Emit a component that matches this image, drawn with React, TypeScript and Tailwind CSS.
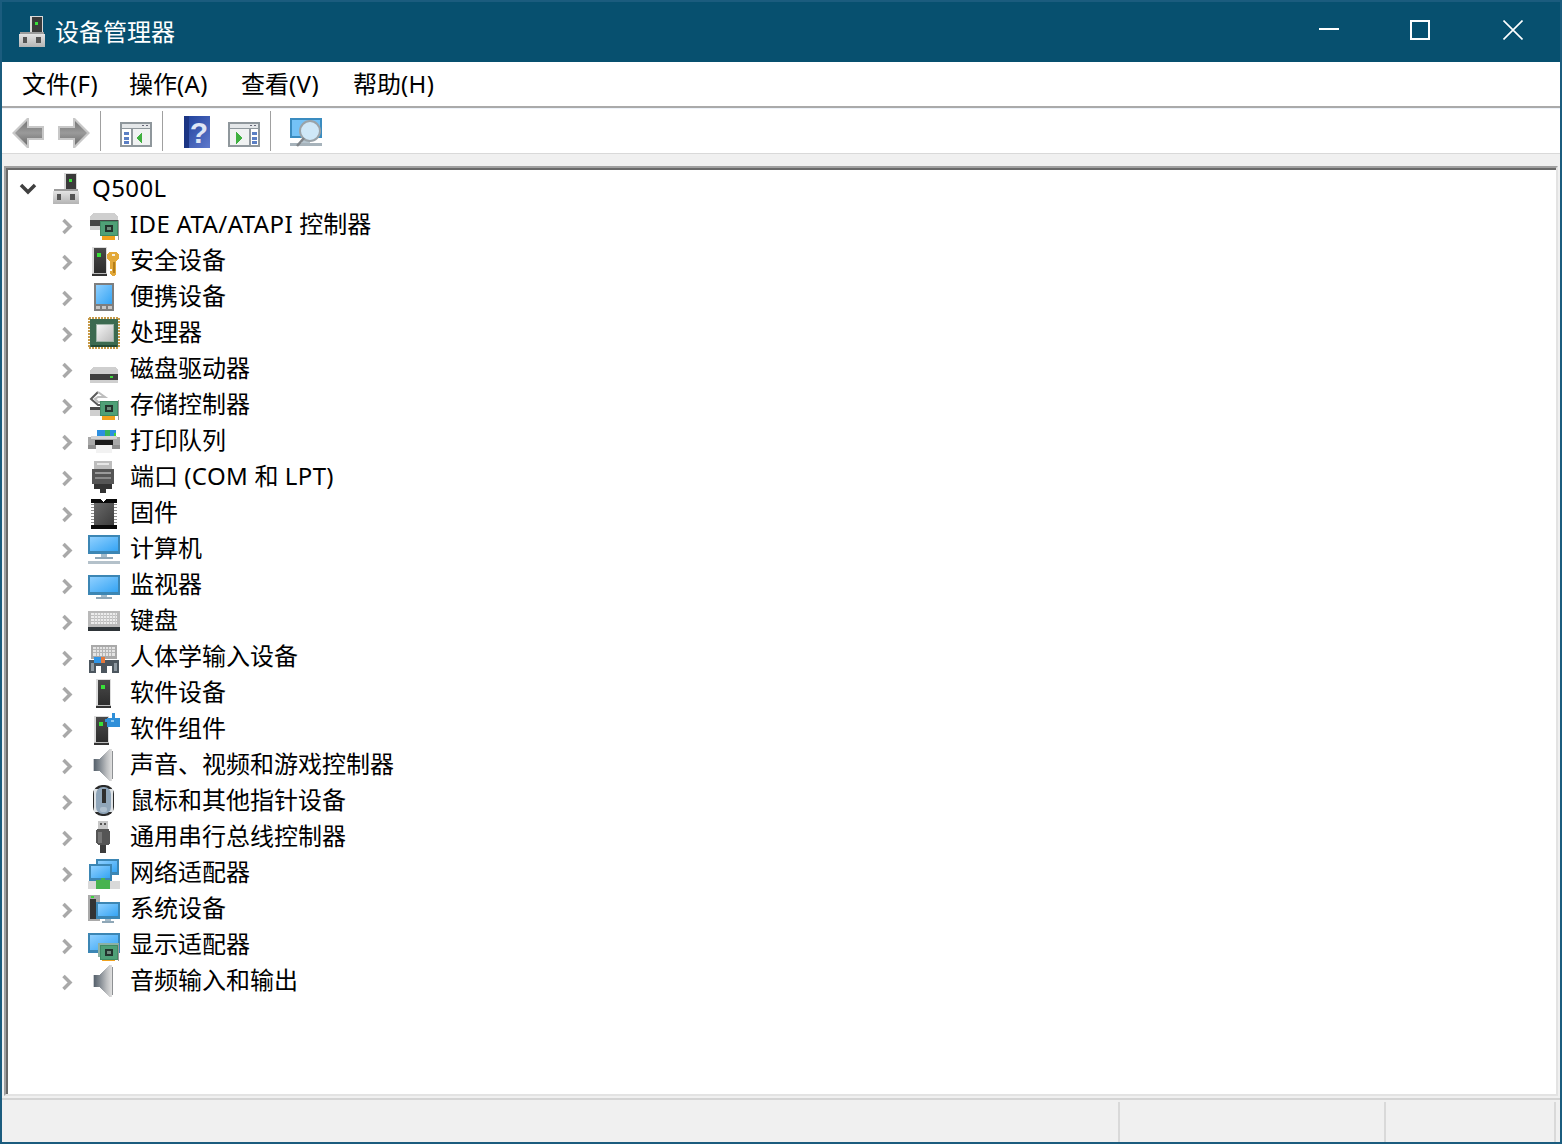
import React from "react";

const FONT = '"Noto Sans","Noto Sans CJK SC",sans-serif';

const Defs = () => (
  <svg width="0" height="0" className="absolute">
    <defs>
      <linearGradient id="scr" x1="0" y1="0" x2="1" y2="1">
        <stop offset="0" stopColor="#8fd0ff" />
        <stop offset="1" stopColor="#35a4f4" />
      </linearGradient>
      <linearGradient id="tower" x1="0" y1="0" x2="0" y2="1">
        <stop offset="0" stopColor="#4a4a4a" />
        <stop offset="1" stopColor="#2d2d2d" />
      </linearGradient>
      <linearGradient id="spk" x1="0" y1="0" x2="1" y2="0">
        <stop offset="0" stopColor="#56616c" />
        <stop offset="0.35" stopColor="#868d94" />
        <stop offset="0.7" stopColor="#bcbec0" />
        <stop offset="1" stopColor="#e0e0e0" />
      </linearGradient>
      <linearGradient id="arrow" x1="0" y1="0" x2="0" y2="1">
        <stop offset="0" stopColor="#777777" />
        <stop offset="0.5" stopColor="#9a9a9a" />
        <stop offset="1" stopColor="#6c6c6c" />
      </linearGradient>
      <linearGradient id="help" x1="0" y1="0" x2="1" y2="1">
        <stop offset="0" stopColor="#1d3f9a" />
        <stop offset="1" stopColor="#5f79cc" />
      </linearGradient>
      <linearGradient id="chipc" x1="0" y1="0" x2="1" y2="1">
        <stop offset="0" stopColor="#f4f4f4" />
        <stop offset="1" stopColor="#bdbdbd" />
      </linearGradient>
      <linearGradient id="base" x1="0" y1="0" x2="0" y2="1">
        <stop offset="0" stopColor="#e4e4e4" />
        <stop offset="1" stopColor="#b4b4b4" />
      </linearGradient>
      <linearGradient id="chipd" x1="0" y1="0" x2="1" y2="1">
        <stop offset="0" stopColor="#6a6a6a" />
        <stop offset="1" stopColor="#3c3c3c" />
      </linearGradient>
    </defs>
  </svg>
);

const I = ({ children }: { children: React.ReactNode }) => (
  <svg width="32" height="32" viewBox="0 0 32 32" className="shrink-0 block" shapeRendering="crispEdges">
    {children}
  </svg>
);

const Card = ({ x, y }: { x: number; y: number }) => (
  <g transform={`translate(${x} ${y})`}>
    <rect x="0" y="0" width="18" height="15" fill="#3f8a63" />
    <rect x="1" y="1" width="16" height="13" fill="#4fa077" />
    <rect x="5" y="4" width="8" height="7" fill="#22332c" />
    <rect x="7" y="6" width="4" height="3" fill="#6f8a7c" />
    <rect x="2" y="15" width="13" height="4" fill="#f0a21e" />
    <rect x="18" y="-1" width="1" height="20" fill="#9a9a9a" />
  </g>
);

const Tower = ({ x, y }: { x: number; y: number }) => (
  <g transform={`translate(${x} ${y})`}>
    <rect x="0" y="0" width="15" height="26" fill="#dcdcdc" />
    <rect x="2" y="1" width="12" height="25" fill="url(#tower)" />
    <rect x="5" y="6" width="4" height="4" fill="#38e038" />
    <rect x="0" y="26" width="15" height="1" fill="#bcbcbc" />
    <rect x="0" y="27" width="15" height="2" fill="#333" />
  </g>
);

const Screen = ({ x, y, w, h }: { x: number; y: number; w: number; h: number }) => (
  <g>
    <rect x={x} y={y} width={w} height={h} fill="#3c86b4" />
    <rect x={x + 2} y={y + 2} width={w - 4} height={h - 5} fill="url(#scr)" />
  </g>
);

const Speaker = () => (
  <I>
    <path d="M6 10h5L22 0h2v32h-2L11 22H6z" fill="url(#spk)" />
    <rect x="24" y="2" width="1" height="28" fill="#8d9093" />
    <rect x="5" y="10" width="1" height="12" fill="#c9ccd0" />
  </I>
);

const icons: Record<string, React.ReactNode> = {
  ide: (
    <I>
      <path d="M5 4h22l3 4v4H2V8z" fill="#cfcfcf" />
      <rect x="2" y="11" width="28" height="6" fill="#444" />
      <rect x="2" y="17" width="28" height="4" fill="#cfcfcf" />
      <Card x={12} y={12} />
    </I>
  ),
  sec: (
    <I>
      <Tower x={4} y={2} />
      <path d="M21 7h8l2 3v4l-3 2v13l-2 2h-2l-2-2v-3h2v-2h-2V16l-3-2v-4z" fill="#e3a93a" />
      <rect x="24" y="9" width="3" height="2" fill="#f4f1e4" />
      <rect x="25" y="17" width="2" height="11" fill="#b57e1a" />
    </I>
  ),
  port: (
    <I>
      <rect x="6" y="2" width="20" height="28" fill="#7e7e7e" />
      <rect x="8" y="4" width="16" height="19" fill="url(#scr)" />
      <rect x="8" y="25" width="4" height="3" fill="#c7c7c7" />
      <rect x="14" y="25" width="4" height="3" fill="#c7c7c7" />
      <rect x="20" y="25" width="4" height="3" fill="#c7c7c7" />
    </I>
  ),
  cpu: (
    <I>
      <path d="M1 1H31M1 31H31M1 1V31M31 1V31" stroke="#c79a48" strokeWidth="2" strokeDasharray="2 1" fill="none" />
      <rect x="2" y="2" width="28" height="28" fill="#3c6a50" />
      <rect x="3" y="28" width="26" height="2" fill="#234a35" />
      <rect x="8" y="7" width="18" height="18" fill="#9fb5a8" />
      <rect x="9" y="8" width="16" height="16" fill="url(#chipc)" />
    </I>
  ),
  disk: (
    <I>
      <path d="M5 14h22l3 3v5H2v-5z" fill="#cfcfcf" />
      <rect x="2" y="21" width="28" height="6" fill="#3f3f3f" />
      <rect x="22" y="23" width="3" height="2" fill="#3fd63f" />
      <rect x="2" y="27" width="28" height="3" fill="#cfcfcf" />
    </I>
  ),
  stor: (
    <I>
      <path d="M10 3 3 10l7 6h9" fill="none" stroke="#5a5a5a" strokeWidth="2" shapeRendering="auto" />
      <path d="M10 3l7 5h-7l-3 2 3 3h8" fill="none" stroke="#bdbdbd" strokeWidth="2" shapeRendering="auto" />
      <rect x="2" y="18" width="12" height="3" fill="#4a4a4a" />
      <rect x="2" y="21" width="12" height="6" fill="#cfcfcf" />
      <Card x={12} y={12} />
    </I>
  ),
  print: (
    <I>
      <rect x="9" y="5" width="19" height="7" fill="#2c8fe0" />
      <rect x="17" y="5" width="5" height="6" fill="#35b35a" />
      <rect x="26" y="8" width="2" height="3" fill="#3fd63f" />
      <rect x="0" y="12" width="32" height="12" fill="#a9a9a9" />
      <rect x="3" y="11" width="26" height="3" fill="#d4d4d4" />
      <rect x="7" y="15" width="18" height="5" fill="#1b1b1b" />
      <rect x="0" y="20" width="32" height="4" fill="#8e8e8e" />
      <rect x="8" y="20" width="16" height="8" fill="#f2f2f2" />
    </I>
  ),
  serial: (
    <I>
      <rect x="6" y="0" width="18" height="8" fill="#bdbdbd" />
      <rect x="9" y="2" width="12" height="2" fill="#e6e6e6" />
      <rect x="4" y="8" width="22" height="15" fill="#555" />
      <rect x="7" y="11" width="16" height="2" fill="#9a9a9a" />
      <rect x="7" y="16" width="16" height="2" fill="#8a8a8a" />
      <rect x="6" y="23" width="18" height="5" fill="#333" />
      <rect x="12" y="28" width="6" height="4" fill="#333" />
    </I>
  ),
  firm: (
    <I>
      <path d="M3 2h9l3 3 3-3h11v4H3z" fill="#0b0b0b" />
      <rect x="3" y="28" width="26" height="4" fill="#0b0b0b" />
      <rect x="6" y="6" width="20" height="22" fill="url(#chipd)" />
      <path d="M3 7.500h3M3 10.500h3M3 13.500h3M3 16.500h3M3 19.500h3M3 22.500h3M3 25.500h3M26 7.500h3M26 10.500h3M26 13.500h3M26 16.500h3M26 19.500h3M26 22.500h3M26 25.500h3" stroke="#8f8f8f" strokeWidth="1" />
    </I>
  ),
  comp: (
    <I>
      <Screen x={0} y={2} w={32} h={19} />
      <rect x="13" y="21" width="6" height="4" fill="#a5bccb" />
      <rect x="7" y="24" width="18" height="2" fill="#8fa7b7" />
      <rect x="0" y="28" width="32" height="3" fill="#b4c1ca" />
    </I>
  ),
  mon: (
    <I>
      <Screen x={0} y={6} w={32} h={20} />
      <rect x="13" y="26" width="6" height="2" fill="#a5bccb" />
      <rect x="8" y="28" width="16" height="2" fill="#8fa7b7" />
    </I>
  ),
  kb: (
    <I>
      <rect x="0" y="6" width="32" height="16" fill="#b9b9b9" />
      <rect x="3" y="8" width="26" height="11" fill="#ececec" />
      <path d="M3 10.500h26M3 13.500h26M3 16.500h26" stroke="#bdbdbd" strokeWidth="1" />
      <path d="M6.500 8v11M9.500 8v11M12.500 8v11M15.500 8v11M18.500 8v11M21.500 8v11M24.500 8v11M27.500 8v11" stroke="#c9c9c9" strokeWidth="1" />
      <rect x="0" y="22" width="32" height="4" fill="#2e3438" />
    </I>
  ),
  hid: (
    <I>
      <rect x="3" y="4" width="26" height="14" fill="#a9a9a9" />
      <rect x="5" y="6" width="22" height="9" fill="#e4e4e4" />
      <path d="M5 8.500h22M5 11.500h22M8.500 6v9M11.500 6v9M14.500 6v9M17.500 6v9M20.500 6v9M23.500 6v9" stroke="#b5b5b5" strokeWidth="1" />
      <path d="M1 19h30v13h-7v-7h-5v7h-6v-7H8v7H1z" fill="#4c565e" />
      <rect x="3" y="22" width="3" height="8" fill="#8e99a1" />
      <rect x="26" y="22" width="3" height="8" fill="#8e99a1" />
      <rect x="6" y="16" width="7" height="6" fill="#2f96e8" />
      <rect x="13" y="16" width="4" height="6" fill="#e5793c" />
    </I>
  ),
  swd: (
    <I>
      <Tower x={8} y={2} />
    </I>
  ),
  swc: (
    <I>
      <Tower x={6} y={3} />
      <path d="M24 0h3v5h5v9h-13V9h-2V6h2V5h5z" fill="#2f8fd8" />
      <rect x="23" y="7" width="3" height="2" fill="#8cc8f2" />
    </I>
  ),
  snd: <Speaker />,
  mouse: (
    <I>
      <rect x="5" y="0" width="21" height="31" rx="9" fill="#2a2a2a" shapeRendering="auto" />
      <rect x="6" y="4" width="19" height="23" fill="#dfe3e6" />
      <rect x="8" y="2" width="15" height="27" rx="7" fill="#90a6ba" shapeRendering="auto" />
      <rect x="14" y="4" width="4" height="14" fill="#2e2e2e" />
      <rect x="12" y="22" width="7" height="5" rx="2" fill="#aebfce" shapeRendering="auto" />
    </I>
  ),
  usb: (
    <I>
      <rect x="10" y="0" width="10" height="8" fill="#c7c7c7" />
      <rect x="12" y="2" width="2" height="2" fill="#555" />
      <rect x="16" y="2" width="2" height="2" fill="#555" />
      <path d="M9 8h12l1 3v11l-2 2H10l-2-2V11z" fill="#555" />
      <rect x="10" y="11" width="4" height="11" fill="#777" />
      <rect x="12" y="24" width="6" height="8" fill="#3d3d3d" />
    </I>
  ),
  net: (
    <I>
      <Screen x={8} y={2} w={23} h={16} />
      <Screen x={1} y={7} w={23} h={17} />
      <rect x="0" y="24" width="32" height="8" fill="#d9d9d9" />
      <rect x="8" y="23" width="14" height="9" fill="#47b34f" />
      <rect x="13" y="21" width="4" height="3" fill="#47b34f" />
    </I>
  ),
  sys: (
    <I>
      <rect x="0" y="2" width="12" height="26" fill="#a9a9a9" />
      <rect x="2" y="6" width="6" height="20" fill="#333" />
      <rect x="3" y="3" width="3" height="2" fill="#3fd63f" />
      <Screen x={8} y={9} w={24} h={17} />
      <rect x="17" y="26" width="6" height="2" fill="#a5bccb" />
      <rect x="14" y="28" width="12" height="2" fill="#8fa7b7" />
    </I>
  ),
  disp: (
    <I>
      <Screen x={0} y={4} w={32} h={20} />
      <rect x="10" y="14" width="21" height="14" fill="#8cb1a3" />
      <Card x={12} y={16} />
    </I>
  ),
};

const Node = () => (
  <svg width="32" height="32" viewBox="0 0 32 32" shapeRendering="crispEdges" className="block shrink-0">
    <rect x="13" y="0" width="13" height="16" fill="#d8d8d8" />
    <rect x="15" y="1" width="10" height="15" fill="#3a3a3a" />
    <rect x="18" y="6" width="3" height="3" fill="#38e038" />
    <rect x="3" y="16" width="24" height="3" fill="#9c9c9c" />
    <rect x="2" y="18" width="26" height="13" fill="url(#base)" />
    <rect x="6" y="21" width="4" height="6" fill="#555" />
    <rect x="19" y="21" width="5" height="6" fill="#555" />
  </svg>
);

const BackArrow = ({ flip }: { flip?: boolean }) => (
  <svg width="32" height="30" viewBox="0 0 32 30" className={"block " + (flip ? "-scale-x-100" : "")}>
    <path d="M0 15 15 0h2v8h15v14H17v8h-2z" fill="#c8c8c8" />
    <path d="M3 15 15 3v7h15v10H15v7z" fill="url(#arrow)" />
  </svg>
);

const Pane = ({ right }: { right?: boolean }) => (
  <svg width="32" height="25" viewBox="0 0 32 25" shapeRendering="crispEdges" className="block">
    <rect x="0" y="0" width="32" height="25" fill="#8f979c" />
    <rect x="2" y="2" width="28" height="4" fill="#e4e7e9" />
    <rect x="22" y="3" width="2" height="1" fill="#667" />
    <rect x="26" y="3" width="2" height="1" fill="#667" />
    <rect x="2" y="7" width="28" height="16" fill="#f0f2f2" />
    {!right && <rect x="2" y="7" width="10" height="16" fill="#ffffff" />}
    {right && <rect x="22" y="7" width="8" height="16" fill="#ffffff" />}
    <rect x={right ? 21 : 11} y="7" width="2" height="16" fill="#8f979c" />
    {[10, 15, 19].map((y) => (
      <rect key={y} x={right ? 24 : 4} y={y} width="5" height="3" fill="#5b7fc4" />
    ))}
    <path d={right ? "M8 10l6 6-6 6z" : "M22 10l-6 6 6 6z"} fill="#3fb03f" />
  </svg>
);

const Help = () => (
  <svg width="26" height="32" viewBox="0 0 26 32" className="block">
    <rect x="0" y="0" width="26" height="32" fill="url(#help)" />
    <rect x="0" y="0" width="5" height="32" fill="#1b3584" />
    <text x="15" y="27" fontSize="30" fontWeight="700" textAnchor="middle" fill="#dfe6f5" fontFamily="Liberation Sans, sans-serif">?</text>
  </svg>
);

const Scan = () => (
  <svg width="34" height="32" viewBox="0 0 34 32" className="block">
    <rect x="1" y="2" width="32" height="20" fill="#3a8cc0" />
    <rect x="3" y="4" width="28" height="16" fill="#74c2f6" />
    <rect x="13" y="22" width="8" height="5" fill="#b5c4ce" />
    <rect x="1" y="27" width="32" height="3" fill="#a7b3bb" />
    <circle cx="21" cy="15" r="10" fill="#cfe8f8" stroke="#9aa3a9" strokeWidth="2" />
    <path d="M15 22 8 30" stroke="#7f8488" strokeWidth="2.500" />
  </svg>
);

const Chevron = () => (
  <svg width="14" height="18" viewBox="0 0 14 18" className="block mt-[4px]">
    <path d="M2.500 2 9 8.500 2.500 15" fill="none" stroke="#a9a9a9" strokeWidth="3.500" />
  </svg>
);

const Down = () => (
  <svg width="18" height="12" viewBox="0 0 18 12" className="block">
    <path d="M2 2 9 9 16 2" fill="none" stroke="#404040" strokeWidth="3.500" />
  </svg>
);

// Latin runs are set a hair wider so they take the same room as in the picture.
const Label = ({ text }: { text: string }) => (
  <>
    {text.split(/([A-Za-z0-9/()]+)/).map((part, i) =>
      i % 2 === 1 ? (
        <span key={i} className="tracking-[0.4px]">{part}</span>
      ) : (
        <span key={i}>{part}</span>
      )
    )}
  </>
);

const rows: [string, string][] = [
  ["ide", "IDE ATA/ATAPI 控制器"],
  ["sec", "安全设备"],
  ["port", "便携设备"],
  ["cpu", "处理器"],
  ["disk", "磁盘驱动器"],
  ["stor", "存储控制器"],
  ["print", "打印队列"],
  ["serial", "端口 (COM 和 LPT)"],
  ["firm", "固件"],
  ["comp", "计算机"],
  ["mon", "监视器"],
  ["kb", "键盘"],
  ["hid", "人体学输入设备"],
  ["swd", "软件设备"],
  ["swc", "软件组件"],
  ["snd", "声音、视频和游戏控制器"],
  ["mouse", "鼠标和其他指针设备"],
  ["usb", "通用串行总线控制器"],
  ["net", "网络适配器"],
  ["sys", "系统设备"],
  ["disp", "显示适配器"],
  ["snd", "音频输入和输出"],
];

const Sep = () => <div className="ml-[10px] w-[1px] h-[40px] bg-[#a0a0a0]" />;

export default function App() {
  return (
    <div
      className="w-[1562px] h-[1144px] flex flex-col border-2 border-[#1b5c7e] bg-white text-black text-[24px] leading-[36px] overflow-hidden"
      style={{ fontFamily: FONT }}
    >
      <Defs />
      <div className="h-[60px] shrink-0 bg-[#07506f] flex items-center text-white">
        <div className="ml-[15px] mt-[-1px]"><Node /></div>
        <span className="ml-[6px]">设备管理器</span>
        <div className="ml-auto flex items-center h-full">
          <div className="w-[90px] flex justify-center">
            <div className="w-[20px] h-[2px] bg-white mt-[-4px]" />
          </div>
          <div className="w-[92px] flex justify-center">
            <div className="w-[20px] h-[20px] border-2 border-white mt-[-4px]" />
          </div>
          <div className="w-[94px] flex justify-center">
            <svg width="20" height="20" viewBox="0 0 20 20" className="mt-[-4px]">
              <path d="M0.500 0.500 19.500 19.500M19.500 0.500 0.500 19.500" stroke="#fff" strokeWidth="1.600" />
            </svg>
          </div>
        </div>
      </div>

      <div className="h-[44px] shrink-0 flex items-center pl-[20px]">
        <span className="w-[107px]"><Label text="文件(F)" /></span>
        <span className="w-[112px]"><Label text="操作(A)" /></span>
        <span className="w-[112px]"><Label text="查看(V)" /></span>
        <span><Label text="帮助(H)" /></span>
      </div>
      <div className="h-[2px] shrink-0 bg-[#aaaaaa]" />
      <div className="h-[1px] shrink-0 bg-[#eef3fa]" />

      <div className="h-[44px] shrink-0 flex items-center">
        <div className="ml-[10px] mt-[3px]"><BackArrow /></div>
        <div className="ml-[14px] mt-[3px]"><BackArrow flip /></div>
        <Sep />
        <div className="ml-[19px] mt-[6px]"><Pane /></div>
        <Sep />
        <div className="ml-[21px] mt-[2px]"><Help /></div>
        <div className="ml-[18px] mt-[6px]"><Pane right /></div>
        <Sep />
        <div className="ml-[18px] mt-[2px]"><Scan /></div>
      </div>
      <div className="h-[1px] shrink-0 bg-[#d9d9d9]" />

      <div className="flex-1 min-h-0 flex flex-col bg-[#f0f0f0] pt-[12px] pl-[2px] pr-[2px]">
        <div className="flex-1 min-h-0 border-t-2 border-t-[#a0a0a0] border-l-2 border-l-[#a0a0a0] border-r-2 border-r-[#e3e3e3] border-b-2 border-b-[#e3e3e3]">
          <div className="h-full border-t-2 border-l-2 border-t-[#696969] border-l-[#696969] bg-white pt-[1px]">
            <div className="h-[36px] flex items-center pl-[11px]">
              <Down />
              <div className="ml-[14px]"><Node /></div>
              <span className="ml-[9px] mt-[-2px]"><Label text="Q500L" /></span>
            </div>
            {rows.map(([k, label], i) => (
              <div key={i} className="h-[36px] flex items-center pl-[53px]">
                <Chevron />
                <div className="ml-[13px]">{icons[k]}</div>
                <span className="ml-[10px] mt-[-2px]"><Label text={label} /></span>
              </div>
            ))}
          </div>
        </div>
        <div className="h-[2px] shrink-0 bg-[#f0f0f0]" />
      </div>

      <div className="h-[44px] shrink-0 bg-[#f0f0f0] border-t-2 border-t-[#d4d4d4] flex pt-[2px]">
        <div className="flex-1" />
        <div className="w-[2px] bg-[#d9d9d9]" />
        <div className="w-[264px]" />
        <div className="w-[2px] bg-[#d9d9d9]" />
        <div className="w-[168px]" />
        <div className="w-[2px] bg-[#d9d9d9]" />
        <div className="w-[4px]" />
      </div>
    </div>
  );
}
